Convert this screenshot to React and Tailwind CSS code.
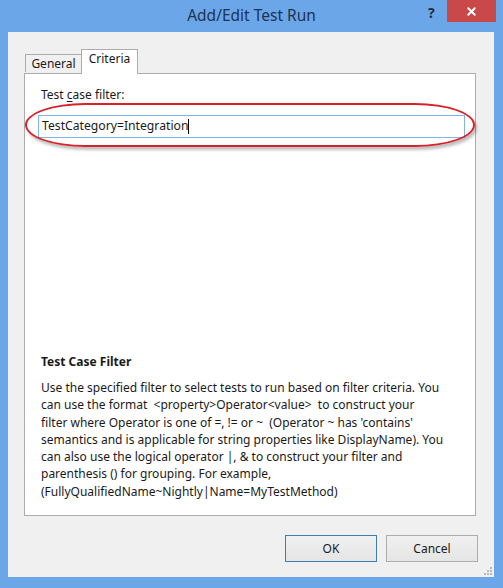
import { X } from 'lucide-react';

const lines = [
  'Use the specified filter to select tests to run based on filter criteria. You',
  'can use the format  <property>Operator<value>  to construct your',
  "filter where Operator is one of =, != or ~  (Operator ~ has 'contains'",
  'semantics and is applicable for string properties like DisplayName). You',
  'can also use the logical operator |, & to construct your filter and',
  'parenthesis () for grouping. For example,',
  '(FullyQualifiedName~Nightly|Name=MyTestMethod)',
];

export default function App() {
  return (
    <div className="w-[503px] h-[588px] bg-[#6ba6e8] flex flex-col text-[#1a1a1a]" style={{ fontFamily: '"Noto Sans", "Open Sans", sans-serif' }}>
      {/* Title bar */}
      <div className="h-[32px] shrink-0 relative flex items-center justify-center">
        <span className="text-[15.5px] text-[#1c3450] leading-none -mt-[1px]">Add/Edit Test Run</span>
        <span className="absolute left-[428px] top-[2px] text-[14px] font-bold text-[#1f2f40]">?</span>
        <div className="absolute left-[447px] top-0 w-[49px] h-[22px] bg-[#c9484a] flex items-center justify-center">
          <X className="w-[13px] h-[13px] text-white" strokeWidth={3.5} />
        </div>
      </div>

      {/* Client area */}
      <div className="flex-1 mx-[8px] mr-[9px] mb-[11px] bg-[#f0f0f0] flex flex-col pl-[16px] pr-[16px] pt-[17px]">
        {/* Tabs */}
        <div className="flex items-end h-[24px] pl-[1px] text-[12px] relative z-10">
          <div className="h-[18px] w-[56px] border border-[#acacac] border-b-0 border-r-0 bg-[#f0f0f0] flex items-center justify-center mb-px leading-none">
            General
          </div>
          <div className="h-[25px] w-[57px] border border-[#acacac] border-b-0 bg-white flex items-start justify-center pt-[3px] -mb-px leading-none">
            Criteria
          </div>
        </div>

        {/* Panel */}
        <div className="h-[443px] w-[452px] border border-[#acacac] bg-white flex flex-col pl-[13px] pr-[10px] pt-[13px] pb-[15px] text-[12px]">
          <div className="ml-[3px] leading-[16px]">
            Test <span className="underline underline-offset-2">c</span>ase filter:
          </div>
          <div className="relative mt-[12px]">
            <div className="h-[23px] border border-[#7eb4ea] bg-white flex items-center pl-[3px] text-[12.2px]">
              <span>TestCategory=Integration</span>
              <span className="w-px h-[15px] bg-black" />
            </div>
            <div className="absolute -left-[13px] -right-[10px] -top-[12px] -bottom-[9px] border-2 border-[#d8222a] rounded-[60px_/_22px] shadow-[2px_3px_3px_rgba(0,0,0,0.25)]" />
          </div>

          <div className="mt-auto ml-[3px]">
            <div className="font-bold leading-[17px] mb-[9px]">Test Case Filter</div>
            <div className="leading-[17.3px] whitespace-pre">
              {lines.map((l, i) => (
                <div key={i}>{l}</div>
              ))}
            </div>
          </div>
        </div>

        {/* Buttons */}
        <div className="flex justify-end gap-[9px] mt-[19px] text-[12px]">
          <button className="w-[92px] h-[27px] border border-[#3c7fb1] bg-gradient-to-b from-[#f0f0f0] to-[#e5e5e5]">OK</button>
          <button className="w-[92px] h-[27px] border border-[#adadad] bg-gradient-to-b from-[#f0f0f0] to-[#e5e5e5]">Cancel</button>
        </div>
        <div className="flex justify-end mt-auto mb-[2px] -mr-[14px]">
          <svg width="9" height="9" viewBox="0 0 9 9">
            {[[7, 1], [4, 4], [7, 4], [1, 7], [4, 7], [7, 7]].map(([x, y], i) => (
              <rect key={i} x={x} y={y} width="2" height="2" fill="#b8b8b8" />
            ))}
          </svg>
        </div>
      </div>
    </div>
  );
}
